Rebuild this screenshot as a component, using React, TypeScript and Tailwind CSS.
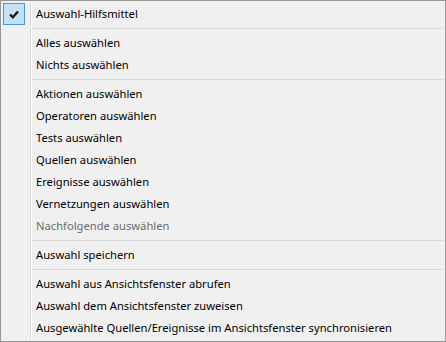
import * as React from "react";

type Entry = { label?: string; disabled?: boolean; checked?: boolean; sep?: boolean };

const entries: Entry[] = [
  { label: "Auswahl-Hilfsmittel", checked: true },
  { sep: true },
  { label: "Alles auswählen" },
  { label: "Nichts auswählen" },
  { sep: true },
  { label: "Aktionen auswählen" },
  { label: "Operatoren auswählen" },
  { label: "Tests auswählen" },
  { label: "Quellen auswählen" },
  { label: "Ereignisse auswählen" },
  { label: "Vernetzungen auswählen" },
  { label: "Nachfolgende auswählen", disabled: true },
  { sep: true },
  { label: "Auswahl speichern" },
  { sep: true },
  { label: "Auswahl aus Ansichtsfenster abrufen" },
  { label: "Auswahl dem Ansichtsfenster zuweisen" },
  { label: "Ausgewählte Quellen/Ereignisse im Ansichtsfenster synchronisieren" },
];

function Gutter({ checked }: { checked?: boolean }) {
  return (
    <div className="flex w-[29px] shrink-0 self-stretch">
      <div className="w-[27px] flex items-start">
        {checked && (
          <div className="w-[22px] h-[22px] border border-[#3d9be6] bg-[#c5e1f6] flex items-center justify-center">
            <svg width="10" height="9" viewBox="0 0 10 9">
              <path d="M1 4.5 L3.8 7.3 L9 1.5" stroke="#1a1a1a" strokeWidth="2.4" fill="none" />
            </svg>
          </div>
        )}
      </div>
      <div className="w-px bg-[#d7d7d7]" />
      <div className="w-px bg-white" />
    </div>
  );
}

export default function App() {
  return (
    <div
      className="w-[446px] h-[342px] border border-[#979797] bg-[#f0f0f0] p-[2px] text-[11.2px] text-black"
      style={{ fontFamily: '"Noto Sans", "Open Sans", sans-serif' }}
    >
      {entries.map((e, i) =>
        e.sep ? (
          <div key={i} className="flex h-[7px]">
            <Gutter />
            <div className="flex-1 flex flex-col justify-center">
              <div className="h-px bg-[#d7d7d7]" />
            </div>
          </div>
        ) : (
          <div key={i} className="flex h-[22px] items-center">
            <Gutter checked={e.checked} />
            <span className={"pl-[4px] whitespace-nowrap " + (e.disabled ? "text-[#6d6d6d]" : "")}>
              {e.label}
            </span>
          </div>
        )
      )}
    </div>
  );
}
